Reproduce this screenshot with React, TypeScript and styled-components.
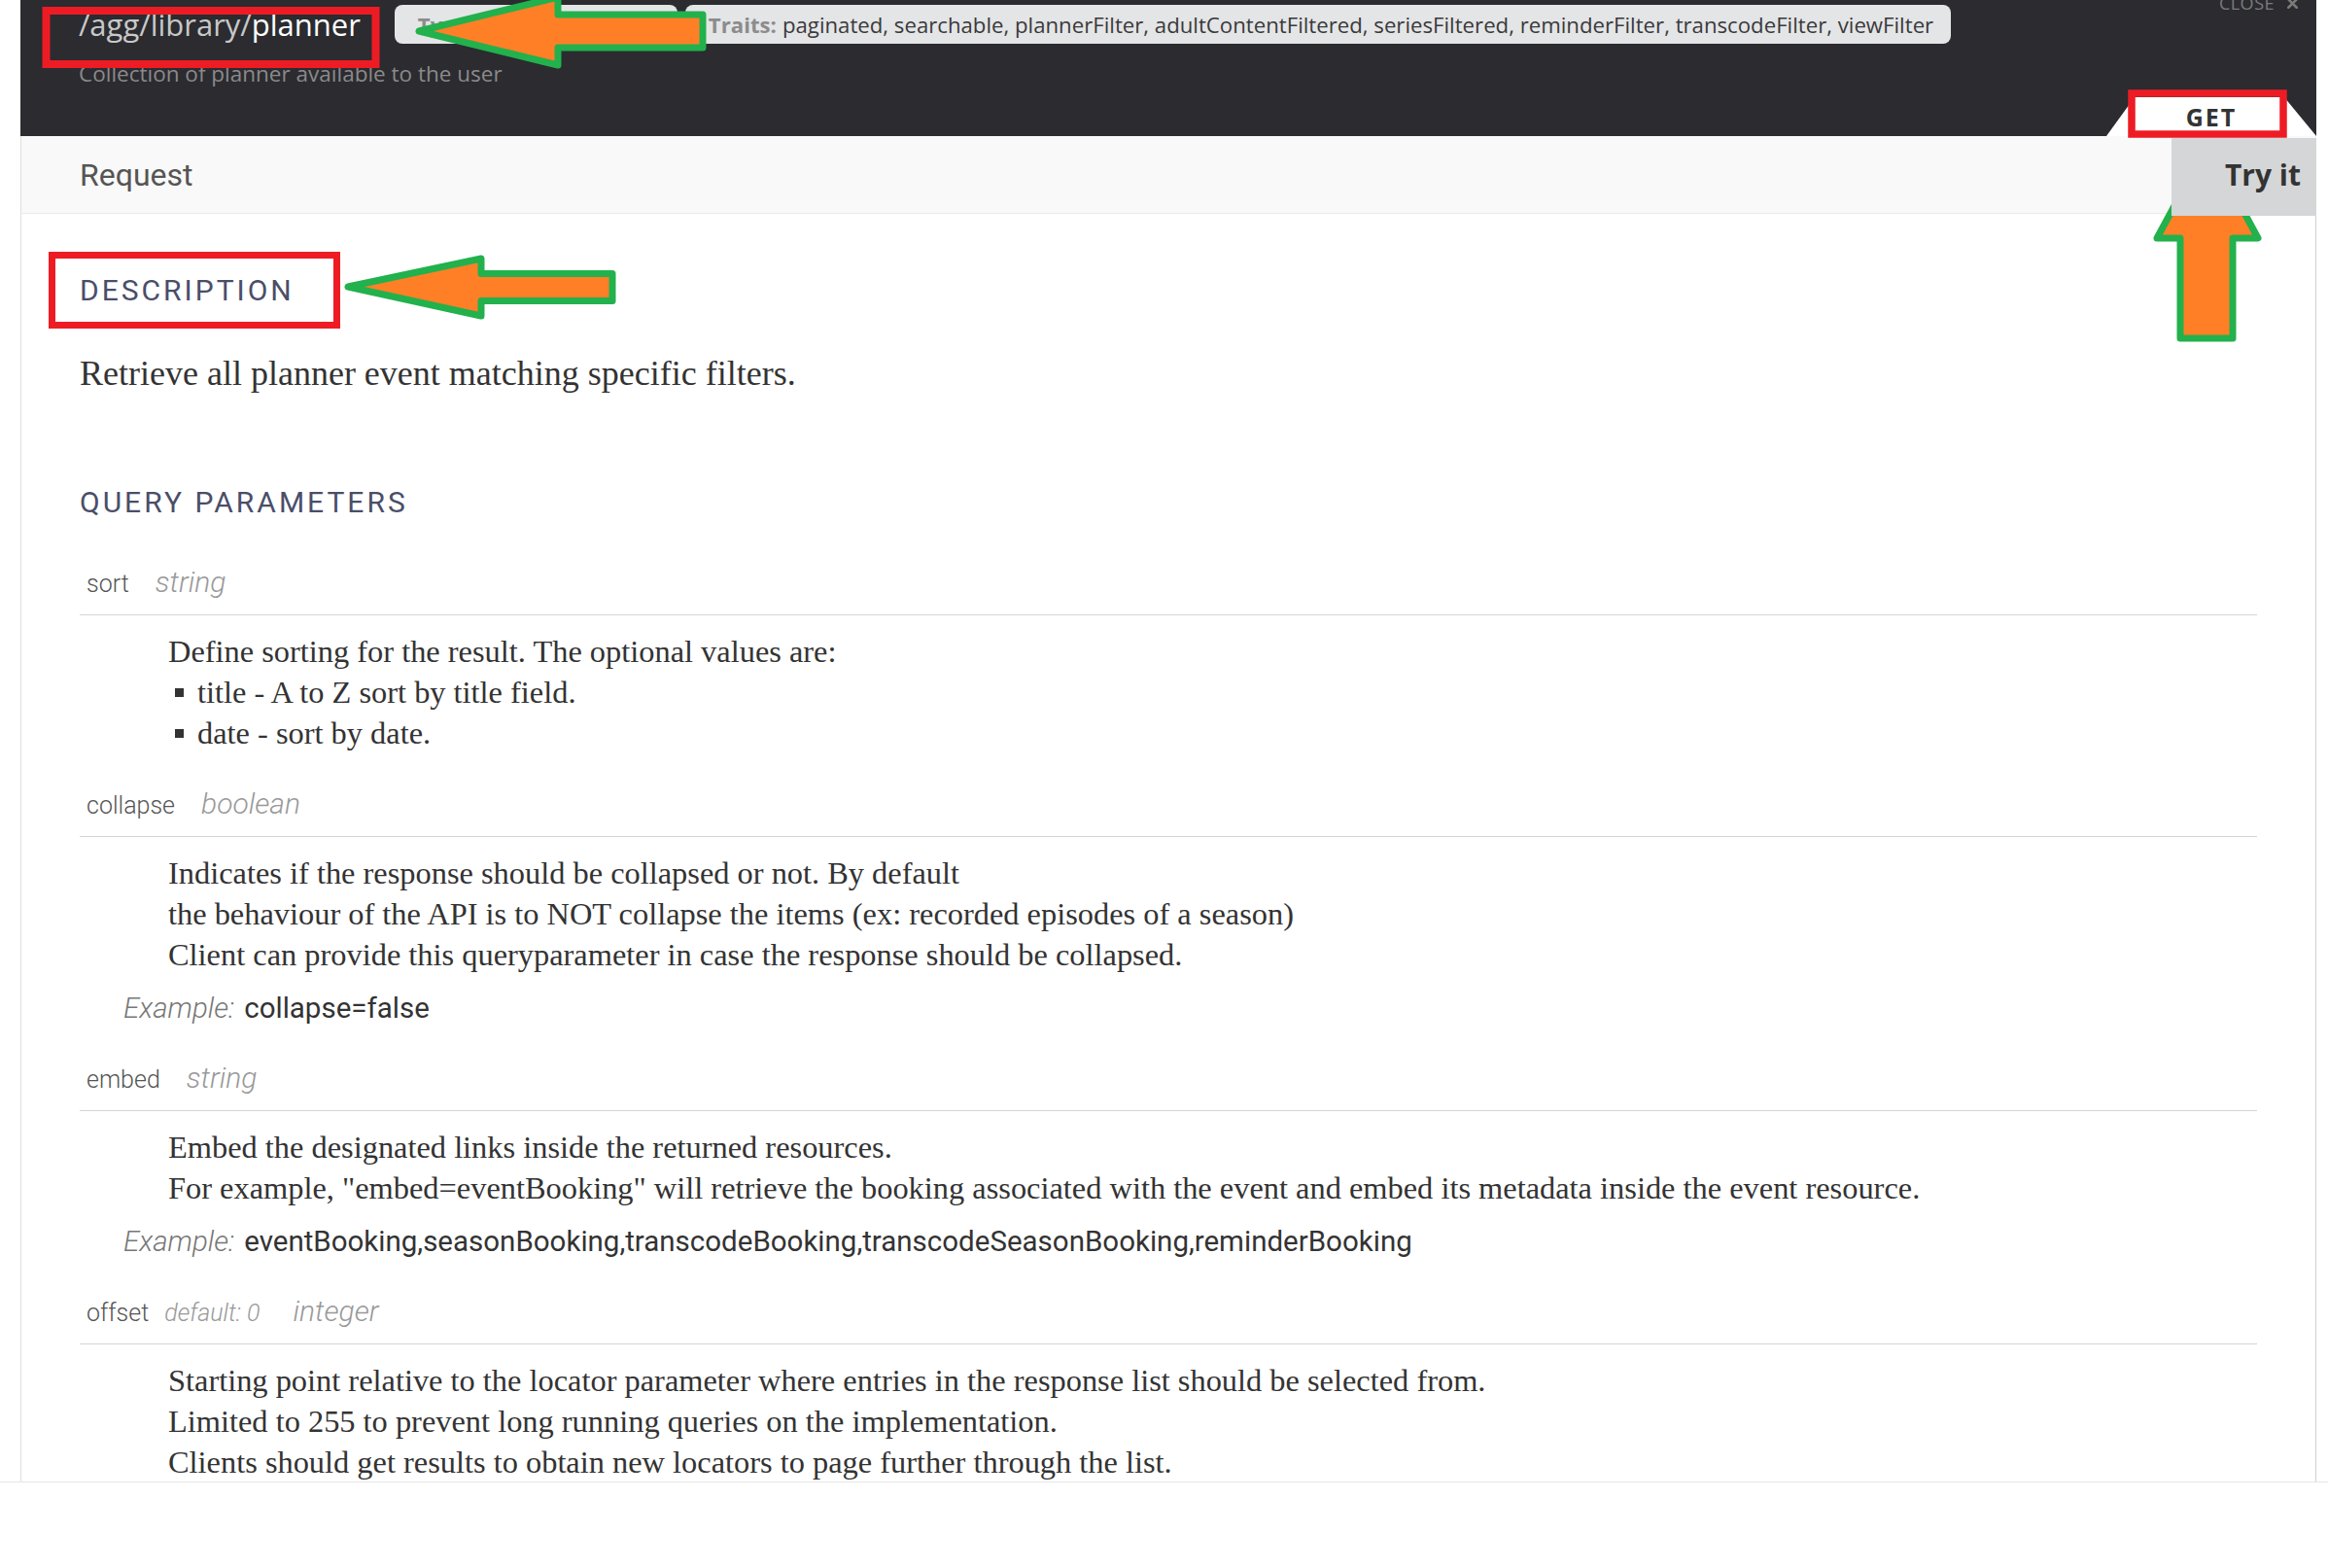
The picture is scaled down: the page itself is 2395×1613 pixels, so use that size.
import React from "react";
import styled, { createGlobalStyle } from "styled-components";
import { X } from "lucide-react";

const GlobalStyle = createGlobalStyle`
  html, body { margin: 0; padding: 0; background: #fff; }
  body { font-family: "Open Sans", "Noto Sans", sans-serif; }
  * { box-sizing: border-box; }
`;

const Page = styled.div`
  position: relative;
  width: 2395px;
  height: 1613px;
  overflow: hidden;
  background: #fff;
`;

const Frame = styled.div`
  height: 1525px;
  padding: 0 12px 0 21px;
  border-bottom: 1px solid #e6e6e6;
`;

const Panel = styled.section`
  height: 100%;
  display: flex;
  flex-direction: column;
`;

const Header = styled.header`
  position: relative;
  flex: none;
  height: 140px;
  background: #2b2b30;
  padding: 5px 0 0 60px;
`;

const TitleRow = styled.div`
  display: flex;
  align-items: center;
  height: 40px;
`;

const Title = styled.h1`
  margin: 0 35px 0 0;
  font-family: "Open Sans", sans-serif;
  font-weight: 400;
  font-size: 31px;
  line-height: 40px;
  color: #c8c8c8;
  white-space: nowrap;
`;

const TitleLeaf = styled.span`
  color: #ffffff;
`;

const Pill = styled.div<{ $minWidth?: number; $ml?: number }>`
  display: flex;
  align-items: center;
  height: 40px;
  min-width: ${(p) => (p.$minWidth ? `${p.$minWidth}px` : "0")};
  margin-left: ${(p) => p.$ml ?? 0}px;
  padding: 0 18px 0 24px;
  border-radius: 8px;
  background: #e4e5e7;
  font-size: 22.2px;
  color: #3a3a3a;
  white-space: nowrap;
`;

const PillKey = styled.b`
  color: #8c8c8c;
  font-weight: 700;
  margin-right: 6px;
`;

const Subtitle = styled.p`
  margin: 17px 0 0;
  font-size: 22.5px;
  line-height: 28px;
  color: #8a8a8a;
`;

const Close = styled.div`
  position: absolute;
  top: -9px;
  right: 16px;
  display: flex;
  align-items: center;
  gap: 10px;
  font-size: 18px;
  line-height: 24px;
  letter-spacing: 0.5px;
  color: #7b7b7b;
`;

const GetTab = styled.div`
  position: absolute;
  right: 0;
  bottom: 0;
  width: 216px;
  height: 40px;
  display: flex;
  align-items: center;
  justify-content: center;
  background: #ffffff;
  clip-path: polygon(29px 0, calc(100% - 33px) 0, 100% 100%, 0 100%);
  font-size: 25px;
  font-weight: 700;
  letter-spacing: 2px;
  color: #333;
`;

const RequestBar = styled.div`
  flex: none;
  height: 80px;
  display: flex;
  align-items: center;
  justify-content: space-between;
  padding-left: 60px;
  background: #f9f9f9;
  border-left: 1px solid #e0e0e0;
  border-bottom: 1px solid #ececec;
`;

const RequestTitle = styled.h2`
  margin: 0;
  font-family: Roboto, "Noto Sans", sans-serif;
  font-weight: 400;
  font-size: 32px;
  color: #555;
`;

const TryIt = styled.button`
  position: relative;
  z-index: 1;
  align-self: flex-start;
  margin-top: 2px;
  width: 149px;
  height: 80px;
  display: flex;
  align-items: center;
  justify-content: flex-end;
  padding: 0 16px 6px 0;
  border: none;
  background: #d5d6d8;
  font-family: "Open Sans", sans-serif;
  font-size: 30px;
  font-weight: 700;
  color: #333;
`;

const Body = styled.div`
  flex: 1;
  min-height: 0;
  overflow: hidden;
  padding: 59px 60px 0 60px;
  border-left: 1px solid #e0e0e0;
  border-right: 1px solid #cfcfcf;
`;

const SectionTitle = styled.h3<{ $mt?: number }>`
  margin: ${(p) => p.$mt ?? 0}px 0 0;
  font-family: Roboto, "Noto Sans", sans-serif;
  font-weight: 400;
  font-size: 30px;
  line-height: 40px;
  letter-spacing: 3px;
  color: #4a4e69;
`;

const Lead = styled.p`
  margin: 43px 0 0;
  font-family: "Liberation Serif", serif;
  font-size: 36px;
  line-height: 44px;
  color: #333;
`;

const ParamList = styled.div`
  margin-top: 42px;
  display: flex;
  flex-direction: column;
  gap: 32px;
`;

const ParamHeader = styled.div`
  display: flex;
  align-items: baseline;
  padding: 0 0 11px 7px;
  line-height: 40px;
  border-bottom: 1px solid #d4d4d4;
  font-family: Roboto, "Noto Sans", sans-serif;
`;

const ParamName = styled.span`
  font-weight: 300;
  font-size: 25px;
  color: #555;
`;

const ParamDefault = styled.span`
  margin-left: 16px;
  font-style: italic;
  font-weight: 300;
  font-size: 25px;
  color: #999;
`;

const ParamType = styled.span<{ $ml: number }>`
  margin-left: ${(p) => p.$ml}px;
  font-style: italic;
  font-weight: 300;
  font-size: 30px;
  color: #999;
`;

const Desc = styled.div`
  margin-top: 16px;
  padding-left: 91px;
  font-family: "Liberation Serif", serif;
  font-size: 32.4px;
  line-height: 42px;
  color: #333;
`;

const DescLine = styled.div``;

const Bullets = styled.ul`
  margin: 0;
  padding: 0 0 0 7px;
  list-style: none;
`;

const Bullet = styled.li`
  display: flex;
  align-items: center;
  &::before {
    content: "";
    flex: none;
    width: 9px;
    height: 9px;
    margin-right: 14px;
    background: #333;
  }
`;

const Example = styled.div`
  margin-top: 14px;
  padding-left: 45px;
  display: flex;
  align-items: baseline;
  line-height: 40px;
  font-family: Roboto, "Noto Sans", sans-serif;
  font-size: 29.5px;
`;

const ExampleLabel = styled.span`
  margin-right: 10px;
  font-style: italic;
  font-weight: 300;
  color: #777;
`;

const ExampleValue = styled.span`
  color: #333;
`;

const Overlay = styled.svg`
  position: absolute;
  left: 0;
  top: 0;
  pointer-events: none;
  overflow: visible;
`;

type Param = {
  name: string;
  type: string;
  def?: string;
  lines?: string[];
  bullets?: string[];
  example?: string;
};

const params: Param[] = [
  {
    name: "sort",
    type: "string",
    lines: ["Define sorting for the result. The optional values are:"],
    bullets: ["title - A to Z sort by title field.", "date - sort by date."],
  },
  {
    name: "collapse",
    type: "boolean",
    lines: [
      "Indicates if the response should be collapsed or not. By default",
      "the behaviour of the API is to NOT collapse the items (ex: recorded episodes of a season)",
      "Client can provide this queryparameter in case the response should be collapsed.",
    ],
    example: "collapse=false",
  },
  {
    name: "embed",
    type: "string",
    lines: [
      "Embed the designated links inside the returned resources.",
      'For example, "embed=eventBooking" will retrieve the booking associated with the event and embed its metadata inside the event resource.',
    ],
    example:
      "eventBooking,seasonBooking,transcodeBooking,transcodeSeasonBooking,reminderBooking",
  },
  {
    name: "offset",
    type: "integer",
    def: "default: 0",
    lines: [
      "Starting point relative to the locator parameter where entries in the response list should be selected from.",
      "Limited to 255 to prevent long running queries on the implementation.",
      "Clients should get results to obtain new locators to page further through the list.",
    ],
  },
];

const ORANGE = "#ff7f27";
const GREEN = "#22b14c";
const RED = "#ed1c24";

export default function App() {
  return (
    <Page>
      <GlobalStyle />
      <Frame>
        <Panel>
          <Header>
            <TitleRow>
              <Title>
                /agg/library/<TitleLeaf>planner</TitleLeaf>
              </Title>
              <Pill $minWidth={291}>
                <PillKey>Type:</PillKey>collection
              </Pill>
              <Pill $ml={8}>
                <PillKey>Traits:</PillKey>
                paginated, searchable, plannerFilter, adultContentFiltered,
                seriesFiltered, reminderFilter, transcodeFilter, viewFilter
              </Pill>
            </TitleRow>
            <Subtitle>Collection of planner available to the user</Subtitle>
            <Close>
              CLOSE <X size={17} strokeWidth={3.5} />
            </Close>
            <GetTab>GET</GetTab>
          </Header>
          <RequestBar>
            <RequestTitle>Request</RequestTitle>
            <TryIt>Try it</TryIt>
          </RequestBar>
          <Body>
            <SectionTitle>DESCRIPTION</SectionTitle>
            <Lead>Retrieve all planner event matching specific filters.</Lead>
            <SectionTitle $mt={91}>QUERY PARAMETERS</SectionTitle>
            <ParamList>
              {params.map((p) => (
                <div key={p.name}>
                  <ParamHeader>
                    <ParamName>{p.name}</ParamName>
                    {p.def && <ParamDefault>{p.def}</ParamDefault>}
                    <ParamType $ml={p.def ? 34 : 27}>{p.type}</ParamType>
                  </ParamHeader>
                  <Desc>
                    {p.lines?.map((l) => (
                      <DescLine key={l}>{l}</DescLine>
                    ))}
                    {p.bullets && (
                      <Bullets>
                        {p.bullets.map((b) => (
                          <Bullet key={b}>{b}</Bullet>
                        ))}
                      </Bullets>
                    )}
                  </Desc>
                  {p.example && (
                    <Example>
                      <ExampleLabel>Example:</ExampleLabel>
                      <ExampleValue>{p.example}</ExampleValue>
                    </Example>
                  )}
                </div>
              ))}
            </ParamList>
          </Body>
        </Panel>
      </Frame>
      <Overlay width={2395} height={1613} viewBox="0 0 2395 1613">
        <rect x={47.5} y={11} width={339} height={55} fill="none" stroke={RED} strokeWidth={8} />
        <rect x={53.5} y={262.5} width={293} height={72} fill="none" stroke={RED} strokeWidth={7} />
        <rect x={2193} y={96} width={156} height={42} fill="none" stroke={RED} strokeWidth={7.5} />
        <polygon
          points="431,32 574,-3 574,15 723,15 723,49 574,49 574,67"
          fill={ORANGE}
          stroke={GREEN}
          strokeWidth={7}
          strokeLinejoin="round"
        />
        <polygon
          points="358,295 495,266 495,281.5 630,281.5 630,309.5 495,309.5 495,325"
          fill={ORANGE}
          stroke={GREEN}
          strokeWidth={7}
          strokeLinejoin="round"
        />
        <polygon
          points="2271,149 2323,245 2297,245 2297,348 2243,348 2243,245 2219,245"
          fill={ORANGE}
          stroke={GREEN}
          strokeWidth={7}
          strokeLinejoin="round"
        />
      </Overlay>
    </Page>
  );
}
